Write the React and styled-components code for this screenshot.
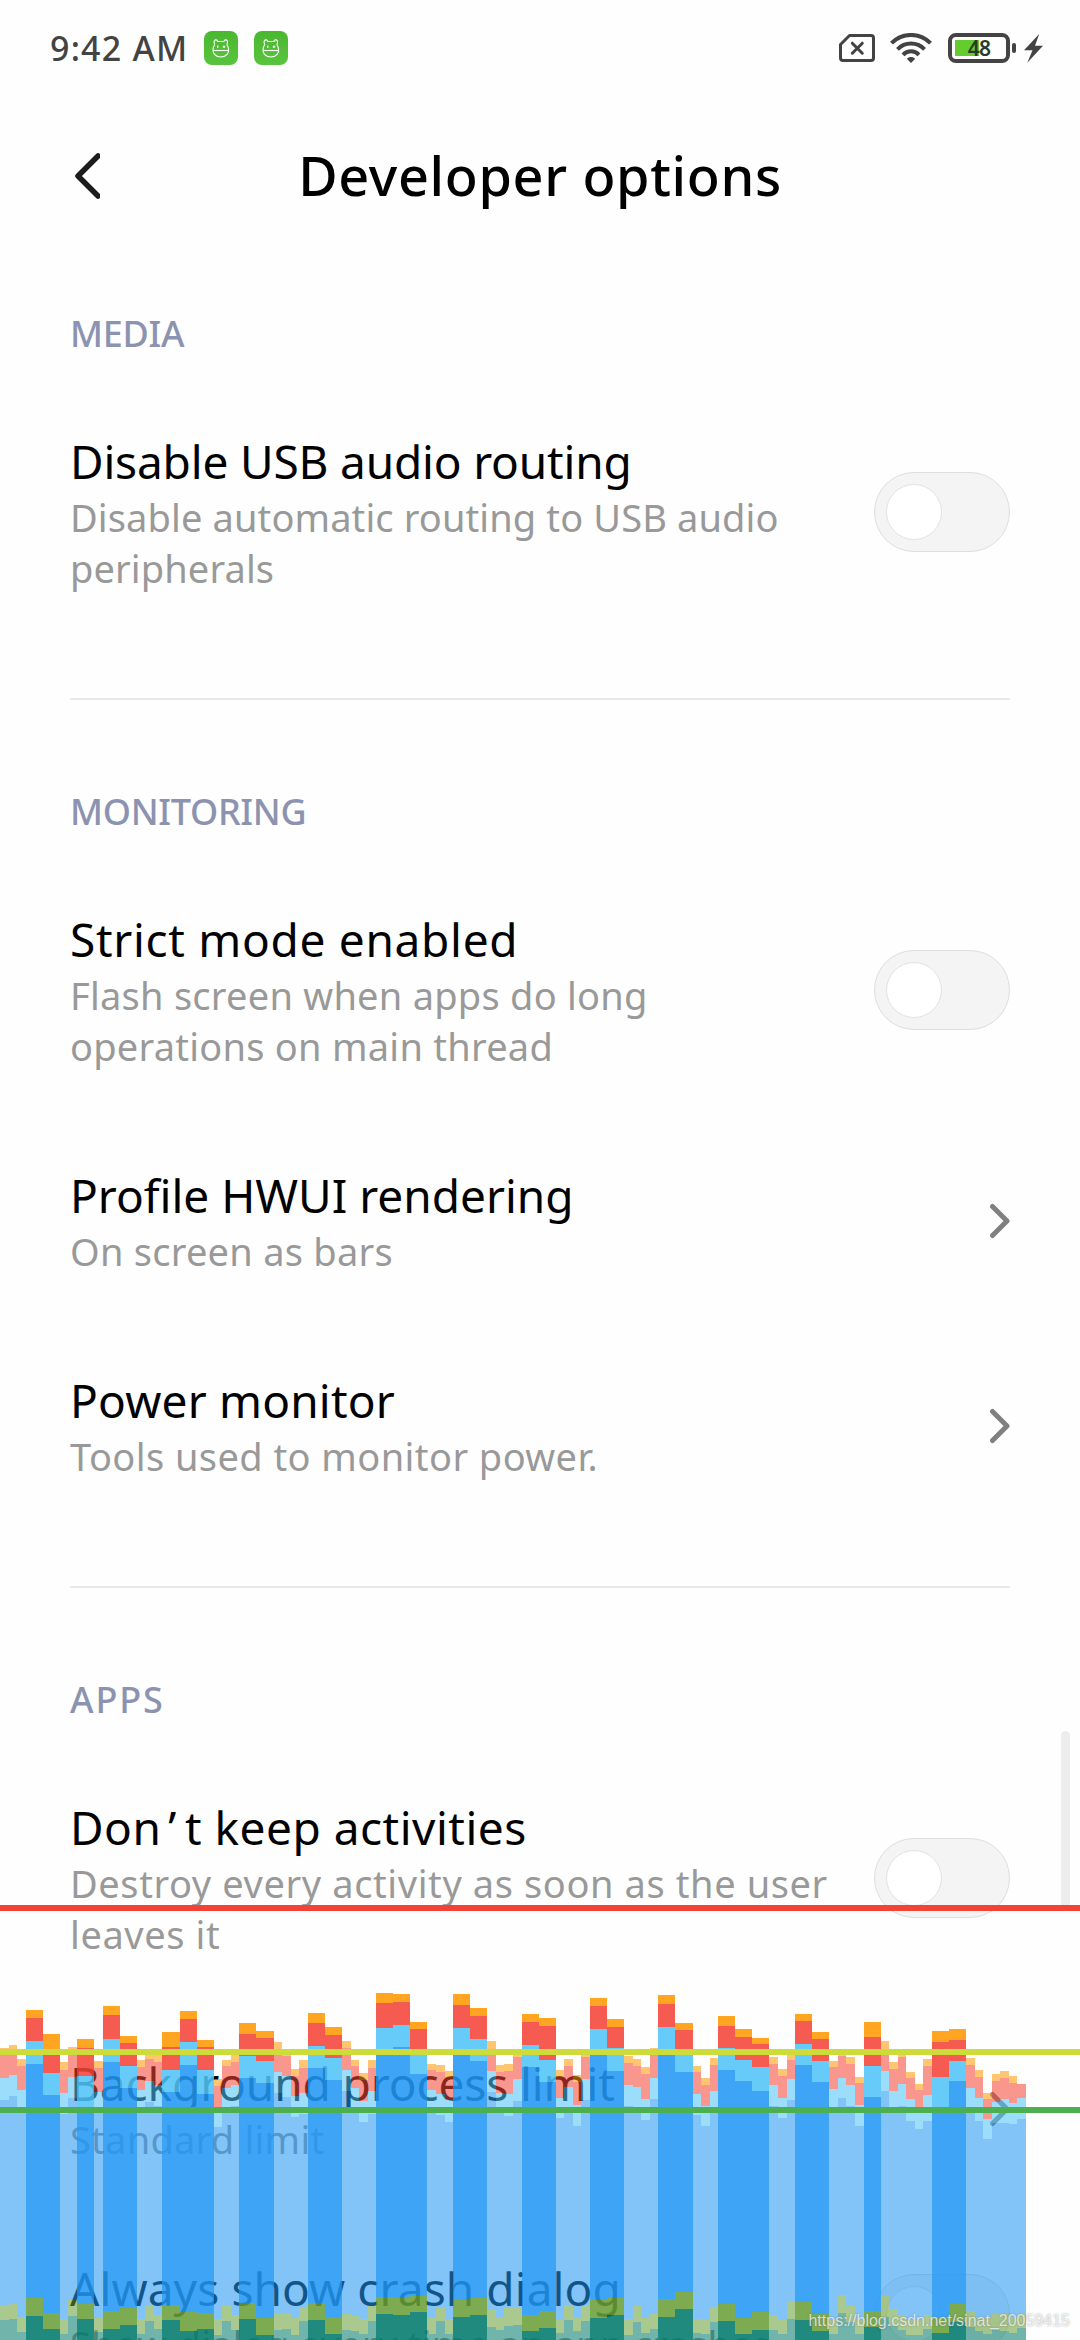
import React from 'react';
import styled, { createGlobalStyle } from 'styled-components';

const GlobalStyle = createGlobalStyle`
  * {
    box-sizing: border-box;
  }

  body {
    margin: 0;
    background: #fefefe;
    font-family: 'Noto Sans', sans-serif;
  }
`;

const Screen = styled.div`
  position: relative;
  width: 1080px;
  height: 2340px;
  overflow: hidden;
  background: #fefefe;
`;

const StatusBar = styled.header`
  display: flex;
  align-items: center;
  justify-content: space-between;
  height: 96px;
  padding: 0 37px 0 50px;
  color: #434343;
`;

const StatusLeft = styled.div`
  display: flex;
  align-items: center;
`;

const Clock = styled.span`
  width: 154px;
  font-size: 34px;
  font-weight: 500;
  letter-spacing: 1.2px;
  white-space: nowrap;
`;

const AppBadge = styled.span`
  display: flex;
  width: 34px;
  height: 34px;
  margin-right: 16px;
  border-radius: 8px;
  background: linear-gradient(#49b82f, #59c43d);
`;

const StatusRight = styled.div`
  display: flex;
  align-items: center;

  svg {
    display: block;
  }
`;

const WifiSlot = styled.span`
  margin: 0 16px 0 15px;
`;

const BatteryBody = styled.div`
  display: flex;
  align-items: center;
  justify-content: center;
  width: 62px;
  height: 30px;
  padding-bottom: 1px;
  border: 4px solid #434343;
  border-radius: 8px;
  font-size: 21px;
  font-weight: 600;
  line-height: 20px;
  letter-spacing: -0.8px;
  color: #2b3a24;
  background: linear-gradient(to right, #66cb2c 24px, transparent 24px) 3px 3px / 48px 16px no-repeat;
`;

const BatteryNub = styled.span`
  width: 4px;
  height: 10px;
  margin: 0 8px 0 2px;
  border-radius: 2px;
  background: #434343;
`;

const TitleBar = styled.div`
  display: grid;
  grid-template-columns: 100px 1fr 100px;
  align-items: center;
  height: 126px;
  padding: 32px 36px 0;

  svg {
    margin: 2px 0 0 36px;
  }
`;

const PageTitle = styled.h1`
  margin: 0;
  font-size: 54px;
  font-weight: 500;
  line-height: 80px;
  letter-spacing: 0.65px;
  text-align: center;
  color: #000;
`;

const Section = styled.section`
  margin: 0 70px;
  padding-bottom: 58px;
  border-bottom: 2px solid #e9e9e9;
`;

const SectionTitle = styled.h2`
  height: 162px;
  margin: 0;
  padding-top: 87px;
  font-size: 36px;
  font-weight: 500;
  line-height: 50px;
  letter-spacing: ${({ $spacing = -0.3 }) => $spacing}px;
  color: #8c93b0;
`;

const Row = styled.div`
  display: flex;
  align-items: center;
  justify-content: space-between;
  padding: 46px 0;
`;

const RowText = styled.div`
  width: 766px;
`;

const RowTitle = styled.div`
  font-size: 46px;
  line-height: 62px;
  letter-spacing: ${({ $spacing = 0 }) => $spacing}px;
  white-space: nowrap;
  color: #000;
`;

const Summary = styled.div`
  font-size: 38px;
  line-height: 51px;
  letter-spacing: ${({ $spacing = 0.25 }) => $spacing}px;
  color: #999;
`;

const Apostrophe = styled.span`
  padding: 0 8px 0 7px;
`;

const Switch = styled.span`
  width: 136px;
  height: 80px;
  padding: 11px;
  border: 1px solid #dedede;
  border-radius: 40px;
  background: #f4f4f4;
`;

const Knob = styled.span`
  display: block;
  width: 56px;
  height: 56px;
  border: 1px solid #e2e2e2;
  border-radius: 50%;
  background: #fff;
`;

const ScrollThumb = styled.div`
  position: absolute;
  top: 1731px;
  right: 10px;
  width: 9px;
  height: 178px;
  border-radius: 5px;
  background: #ededed;
`;

const ProfilerOverlay = styled.svg`
  position: absolute;
  left: 0;
  bottom: 0;
  width: 1080px;
  height: 440px;
`;

const Watermark = styled.div`
  position: absolute;
  right: 10px;
  bottom: 9px;
  font-family: 'Liberation Sans', sans-serif;
  font-size: 16px;
  line-height: 20px;
  color: rgba(255, 255, 255, 0.72);
  text-shadow: 0 0 2px rgba(90, 90, 90, 0.55);
`;

const COLORS = ['#ff9800', '#f44336', '#4fc3f7', '#2196f3', '#689f38', '#00796b'];
const BASE = 1140;

// [x, width, janky, top of each stage from the last one down to the first]
const FRAMES = [
  [0, 27, 0, 264, 286, 353, 420, 1036, 1080],
  [27, 24, 0, 255, 267, 345, 408, 1032, 1078],
  [51, 27, 0, 297, 318, 390, 450, 1072, 1115],
  [78, 51, 1, 150, 174, 243, 312, 1015, 1068],
  [129, 51, 1, 222, 268, 339, 405, 1059, 1108],
  [180, 24, 0, 306, 330, 399, 462, 1077, 1122],
  [204, 27, 0, 261, 285, 351, 414, 1020, 1067],
  [231, 51, 1, 237, 265, 348, 441, 1032, 1077],
  [282, 27, 0, 303, 324, 396, 459, 1074, 1116],
  [309, 51, 1, 138, 165, 237, 306, 1053, 1106],
  [360, 51, 1, 228, 249, 318, 384, 1044, 1096],
  [411, 24, 0, 300, 321, 390, 455, 1077, 1122],
  [435, 27, 0, 283, 297, 363, 426, 1034, 1084],
  [462, 24, 0, 285, 306, 375, 438, 1065, 1107],
  [486, 54, 1, 216, 261, 330, 396, 1036, 1080],
  [540, 51, 1, 153, 177, 246, 315, 1056, 1112],
  [591, 51, 1, 240, 262, 330, 402, 1059, 1108],
  [642, 24, 0, 357, 378, 441, 501, 1077, 1124],
  [666, 27, 0, 300, 318, 384, 447, 1034, 1084],
  [693, 24, 0, 285, 306, 375, 438, 1065, 1110],
  [717, 51, 1, 189, 222, 288, 354, 1029, 1078],
  [768, 54, 1, 213, 234, 303, 369, 1074, 1124],
  [822, 24, 0, 246, 267, 336, 399, 1063, 1110],
  [846, 27, 0, 286, 288, 348, 411, 1059, 1106],
  [873, 24, 0, 327, 348, 408, 471, 1074, 1124],
  [897, 27, 0, 300, 324, 399, 462, 1040, 1084],
  [924, 51, 1, 159, 189, 258, 324, 1029, 1080],
  [975, 51, 1, 201, 225, 294, 360, 1071, 1122],
  [1026, 27, 0, 243, 265, 330, 393, 1062, 1110],
  [1053, 24, 0, 300, 318, 384, 447, 1068, 1112],
  [1077, 27, 0, 339, 360, 423, 486, 1078, 1122],
  [1104, 24, 0, 300, 324, 393, 462, 1038, 1082],
  [1128, 51, 1, 99, 129, 204, 267, 1011, 1063],
  [1179, 51, 1, 102, 126, 195, 261, 1013, 1065],
  [1230, 51, 1, 186, 207, 268, 342, 1008, 1057],
  [1281, 27, 0, 312, 330, 390, 459, 1074, 1122],
  [1308, 27, 0, 316, 335, 402, 465, 1040, 1084],
  [1335, 24, 0, 333, 350, 420, 486, 1078, 1122],
  [1359, 51, 1, 102, 135, 204, 270, 1019, 1070],
  [1410, 51, 1, 144, 168, 237, 303, 1014, 1065],
  [1461, 27, 0, 243, 267, 333, 396, 1050, 1100],
  [1488, 24, 0, 315, 336, 399, 456, 1071, 1110],
  [1512, 27, 0, 312, 333, 402, 468, 1045, 1098],
  [1539, 27, 0, 267, 291, 357, 423, 1040, 1095],
  [1566, 51, 1, 162, 186, 255, 321, 1065, 1114],
  [1617, 51, 1, 174, 198, 300, 366, 1053, 1105],
  [1668, 24, 0, 330, 350, 414, 474, 1077, 1120],
  [1692, 27, 0, 297, 318, 381, 444, 1034, 1080],
  [1719, 24, 0, 345, 365, 435, 498, 1070, 1114],
  [1743, 27, 0, 280, 291, 357, 420, 1038, 1084],
  [1770, 51, 1, 114, 138, 207, 273, 1020, 1074],
  [1821, 51, 1, 177, 201, 265, 333, 1014, 1065],
  [1872, 27, 0, 288, 309, 375, 438, 1077, 1124],
  [1899, 24, 0, 297, 318, 381, 444, 1038, 1086],
  [1923, 27, 0, 321, 342, 417, 480, 1075, 1120],
  [1950, 24, 0, 264, 286, 354, 417, 1062, 1107],
  [1974, 51, 1, 105, 132, 201, 268, 1018, 1070],
  [2025, 54, 1, 189, 210, 268, 336, 996, 1048],
  [2079, 24, 0, 318, 336, 402, 465, 1077, 1118],
  [2103, 27, 0, 354, 375, 438, 498, 1080, 1122],
  [2130, 24, 0, 294, 315, 393, 456, 1040, 1086],
  [2154, 51, 1, 168, 198, 264, 330, 1032, 1082],
  [2205, 51, 1, 207, 231, 300, 363, 1073, 1122],
  [2256, 51, 1, 234, 252, 321, 393, 1056, 1109],
  [2307, 27, 0, 291, 312, 375, 438, 1065, 1110],
  [2334, 27, 0, 327, 348, 414, 474, 1080, 1122],
  [2361, 24, 0, 285, 300, 357, 420, 1023, 1077],
  [2385, 51, 1, 162, 183, 252, 315, 1025, 1080],
  [2436, 51, 1, 216, 237, 303, 366, 1061, 1112],
  [2487, 27, 0, 303, 321, 387, 450, 1078, 1122],
  [2514, 24, 0, 280, 288, 354, 414, 1004, 1060],
  [2538, 27, 0, 291, 312, 375, 438, 1038, 1086],
  [2565, 27, 0, 351, 369, 435, 498, 1077, 1122],
  [2592, 51, 1, 186, 231, 318, 411, 1054, 1100],
  [2643, 24, 0, 243, 267, 333, 393, 1008, 1070],
  [2667, 27, 0, 306, 327, 393, 456, 1047, 1098],
  [2694, 24, 0, 284, 291, 372, 438, 1065, 1110],
  [2718, 27, 0, 336, 354, 417, 483, 1080, 1124],
  [2745, 24, 0, 372, 390, 441, 507, 1080, 1124],
  [2769, 27, 0, 297, 318, 405, 483, 1065, 1108],
  [2796, 51, 1, 213, 246, 351, 441, 1070, 1120],
  [2847, 51, 1, 207, 240, 303, 363, 1032, 1086],
  [2898, 27, 0, 294, 315, 384, 447, 1054, 1100],
  [2925, 24, 0, 330, 351, 414, 483, 1070, 1112],
  [2949, 27, 0, 399, 417, 477, 537, 1074, 1122],
  [2976, 24, 0, 342, 363, 426, 489, 1063, 1110],
  [3000, 27, 0, 333, 354, 417, 489, 1063, 1112],
  [3027, 24, 0, 348, 369, 429, 492, 1075, 1120],
  [3051, 27, 0, 372, 372, 414, 477, 1060, 1104],
];

const RobotIcon = () => (
  <AppBadge>
    <svg width="34" height="34" viewBox="0 0 34 34" fill="none" stroke="#fff" strokeWidth="1.1">
      <path d="M9 19.500h15.500" />
      <path d="M10.800 13.500C8.600 16.500 8.400 21 10.300 23.200c1.600 1.900 4 2.800 6.500 2.800s4.900-.9 6.500-2.800c1.900-2.200 1.700-6.700-.5-9.700" />
      <path d="M10.800 13.500c-1.200-1.800-.9-4.200.7-4.600 1.300-.3 1.900.6 2.200 1.600h6.200c.3-1 .9-1.900 2.200-1.600 1.600.4 1.900 2.800.7 4.600" />
      <path d="M13.800 14.500v2.600M18.700 15.800h2.600M20 14.500v2.600" />
    </svg>
  </AppBadge>
);

const SimIcon = () => (
  <svg width="36" height="28" viewBox="0 0 36 28" fill="none" stroke="#434343">
    <path
      d="M10.500 1.500H32a2.500 2.500 0 0 1 2.500 2.500v20a2.500 2.500 0 0 1-2.500 2.500H4A2.500 2.500 0 0 1 1.500 24V10.500z"
      strokeWidth="3"
      strokeLinejoin="round"
    />
    <path d="M13.300 9.200l10 10M23.300 9.200l-10 10" strokeWidth="3" strokeLinecap="round" />
  </svg>
);

const WifiIcon = () => (
  <svg width="42" height="30" viewBox="0 0 42 30" fill="none" stroke="#434343" strokeWidth="4">
    <path d="M1.500 10.200C12-.8 30-.8 40.500 10.200" />
    <path d="M7.500 16.300c7.500-7.700 19.500-7.700 27 0" />
    <path d="M13 21.800c4.500-4.600 11.500-4.600 16 0" />
    <path d="M21 30l-4.200-4.300c2.500-2.300 5.900-2.300 8.400 0z" fill="#434343" stroke="none" />
  </svg>
);

const BoltIcon = () => (
  <svg width="19" height="29" viewBox="0 0 19 29">
    <path d="M15.200 0L0 16.300h8.500L3.300 28.700 19 11.800h-8z" fill="#434343" />
  </svg>
);

const BackIcon = () => (
  <svg width="28" height="48" viewBox="0 0 28 48" fill="none">
    <path
      d="M26 4L6 24l20 20"
      stroke="#1c1c1c"
      strokeWidth="5.500"
      strokeLinecap="round"
      strokeLinejoin="round"
    />
  </svg>
);

const Chevron = () => (
  <svg width="20" height="36" viewBox="0 0 20 36" fill="none">
    <path
      d="M2.500 3.500L17 18 2.500 32.500"
      stroke="#808080"
      strokeWidth="5"
      strokeLinecap="round"
      strokeLinejoin="round"
    />
  </svg>
);

const Toggle = () => (
  <Switch>
    <Knob />
  </Switch>
);

const Option = ({ title, summary, toggle, titleSpacing, summarySpacing }) => (
  <Row>
    <RowText>
      <RowTitle $spacing={titleSpacing}>{title}</RowTitle>
      <Summary $spacing={summarySpacing}>{summary}</Summary>
    </RowText>
    {toggle ? <Toggle /> : <Chevron />}
  </Row>
);

const Profiler = () => (
  <ProfilerOverlay viewBox="0 -180 3240 1320" shapeRendering="crispEdges">
    {FRAMES.map(([x, width, janky, ...tops]) => (
      <g key={x} fillOpacity={janky ? 0.87 : 0.56}>
        {tops.map((top, i) => {
          const end = i + 1 < tops.length ? tops[i + 1] : BASE;
          return <rect key={COLORS[i]} x={x} y={top} width={width} height={end - top} fill={COLORS[i]} />;
        })}
      </g>
    ))}
    <rect x="0" y="-165" width="3240" height="18" fill="#f44336" />
    <rect x="0" y="267" width="3240" height="18" fill="#cddc39" />
    <rect x="0" y="441" width="3240" height="18" fill="#4caf50" />
  </ProfilerOverlay>
);

const App = () => (
  <>
    <GlobalStyle />
    <Screen>
      <StatusBar>
        <StatusLeft>
          <Clock>9:42 AM</Clock>
          <RobotIcon />
          <RobotIcon />
        </StatusLeft>
        <StatusRight>
          <SimIcon />
          <WifiSlot>
            <WifiIcon />
          </WifiSlot>
          <BatteryBody>48</BatteryBody>
          <BatteryNub />
          <BoltIcon />
        </StatusRight>
      </StatusBar>
      <TitleBar>
        <BackIcon />
        <PageTitle>Developer options</PageTitle>
      </TitleBar>
      <Section>
        <SectionTitle>MEDIA</SectionTitle>
        <Option
          title="Disable USB audio routing"
          summary="Disable automatic routing to USB audio peripherals"
          titleSpacing={-0.17}
          summarySpacing={0.12}
          toggle
        />
      </Section>
      <Section>
        <SectionTitle>MONITORING</SectionTitle>
        <Option
          title="Strict mode enabled"
          summary="Flash screen when apps do long operations on main thread"
          titleSpacing={0.7}
          toggle
        />
        <Option title="Profile HWUI rendering" summary="On screen as bars" />
        <Option
          title="Power monitor"
          summary="Tools used to monitor power."
          titleSpacing={0.2}
          summarySpacing={0.43}
        />
      </Section>
      <Section>
        <SectionTitle $spacing={1.8}>APPS</SectionTitle>
        <Option
          title={<>Don<Apostrophe>’</Apostrophe>t keep activities</>}
          summary="Destroy every activity as soon as the user leaves it"
          titleSpacing={0.5}
          summarySpacing={0.6}
          toggle
        />
        <Option title="Background process limit" summary="Standard limit" titleSpacing={-0.1} />
        <Option
          title="Always show crash dialog"
          summary="Show dialog every time an app crashes"
          titleSpacing={0.1}
          toggle
        />
      </Section>
      <ScrollThumb />
      <Profiler />
      <Watermark>https://blog.csdn.net/sinat_20059415</Watermark>
    </Screen>
  </>
);

export default App;
